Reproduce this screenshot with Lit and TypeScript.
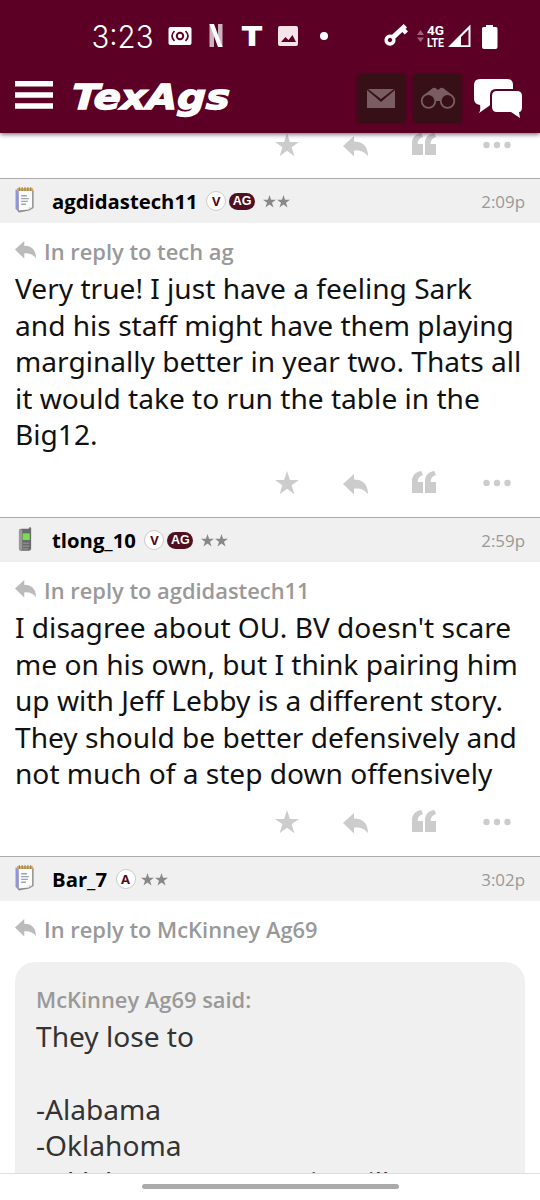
import { LitElement, html, css } from "lit";
import { customElement } from "lit/decorators.js";

const starPath = "M12 0l2.9 8.9H24l-7.4 5.4 2.8 8.9L12 17.7l-7.4 5.5 2.8-8.9L0 8.9h9.1z";
const star = (size: number, fill: string) => html`<svg width=${size} height=${size} viewBox="0 0 24 24"><path fill=${fill} d=${starPath}/></svg>`;
const reply = (w: number, h: number, fill: string) => html`<svg width=${w} height=${h} viewBox="0 0 25 21" preserveAspectRatio="none"><path fill=${fill} d="M0 10L11 0V5.5C19.5 5.5 25 10 25 20C21 15.5 17.5 14 11 14.5V20.5Z"/></svg>`;
const quote = html`<svg width="24" height="22" viewBox="0 0 24 22"><g fill="#ccc"><path d="M0 22V10C0 5 3 1 9.3 0L11 4C7.500 5 5.600 7.500 5.600 11H11V22Z"/><path d="M13 22V10C13 5 16 1 22.300 0L24 4C20.500 5 18.600 7.500 18.600 11H24V22Z"/></g></svg>`;
const dots = html`<svg width="28" height="8" viewBox="0 0 28 8"><g fill="#ccc"><circle cx="3.500" cy="4" r="3.200"/><circle cx="14" cy="4" r="3.200"/><circle cx="24.500" cy="4" r="3.200"/></g></svg>`;
const actions = html`<div class="actions"><span class="a1">${star(24, "#ccc")}</span><span class="a2">${reply(25, 21, "#ccc")}</span><span class="a3">${quote}</span><span class="a4">${dots}</span></div>`;

const notepad = html`<svg width="20" height="26" viewBox="0 0 21 27">
  <path fill="#8a8a8a" d="M2 24l2 2.500 11-2 4.500-2.500V3L4 2z"/>
  <path fill="#9395dc" d="M.5 2.500l3.500.5-.5 22-3-2z"/>
  <path fill="#fbfbfa" d="M4 4h14v17.500l-3.500 2L4 24.500z"/>
  <path fill="#c9cac5" d="M18 21.500l-3.500 2v-2z"/>
  <path fill="#d3b06a" d="M2 1h17v3H2z"/>
  <path stroke="#8a7348" stroke-width="1" d="M4.500 0v4M7.500 0v4M10.500 0v4M13.500 0v4M16.500 0v4"/>
  <path stroke="#9aa5b0" stroke-width="1.400" fill="none" d="M6.500 9h6M6.500 12h8M6.500 15h7M6.500 18h5"/></svg>`;
const phone = html`<svg width="15" height="25" viewBox="0 0 16 26">
  <rect x="11.500" y="0" width="2.500" height="5" rx="1" fill="#777"/>
  <rect x="1" y="1.500" width="13" height="23.500" rx="2.500" fill="#6a6a6a"/>
  <rect x="1" y="2" width="3.500" height="22.500" rx="1.700" fill="#9a9a9a"/>
  <rect x="5" y="6.500" width="7.500" height="7" fill="#79df50"/>
  <path stroke="#929292" stroke-width="1.200" d="M5 17h7M5 20h7M5 23h6"/></svg>`;

@customElement("app-root")
export class AppRoot extends LitElement {
  static styles = css`
    :host { display: flex; flex-direction: column; width: 540px; height: 1200px; overflow: hidden; background: #fff; font-family: "Open Sans", "Noto Sans", sans-serif; }
    * { box-sizing: border-box; }
    svg { display: block; flex: none; overflow: visible; }
    .top { height: 133px; flex: none; background: #5c0025; box-shadow: 0 1px 5px rgba(0,0,0,.65); z-index: 2; position: relative; }
    .status { height: 72px; }
    .bar { height: 61px; display: flex; align-items: flex-start; padding: 2px 0 0 15px; }
    .menu { margin-top: 7px; margin-right: 19px; }
    .btn { width: 49px; height: 49px; border-radius: 4px; background: #371017; display: grid; place-items: center; box-shadow: 0 0 2px #371017; }
    .mail { margin-left: 128px; margin-right: 7px; }
    .mail svg { margin-right: 2px; }
    .chat { margin: 5px 0 0 12px; }
    .feed { flex: none; height: 1040px; overflow: hidden; }
    .lead { height: 45px; overflow: hidden; }
    .actions { display: flex; height: 24px; align-items: center; padding-left: 275px; }
    .a2 { margin-left: 44px; padding-top: 2px; }
    .a3 { margin-left: 44px; margin-top: -3px; }
    .a4 { margin-left: 47px; margin-top: -1px; }
    .head { height: 45px; border-top: 1.500px solid #aaa; background: #f0f0f0; display: flex; align-items: center; padding: 0 15px; }
    .ico { width: 37px; height: 30px; padding-top: 1px; }
    .ico.ph { padding-left: 3px; padding-top: 2px; }
    .name { font-size: 20.300px; font-weight: 700; color: #000; white-space: nowrap; line-height: 29px; }
    .v { width: 20px; height: 20px; border: 1px solid #ccc; border-radius: 50%; background: #fff; color: #500a20; font: 700 13px/18px "Open Sans", sans-serif; text-align: center; margin-left: 8.500px; flex: none; }
    .ag { width: 26px; height: 17px; border-radius: 9px; background: #50101f; color: #fff; font: 700 12.500px/17px "Liberation Sans", sans-serif; text-align: center; margin-left: 3px; flex: none; }
    .stars { display: flex; gap: 1px; margin-left: 8px; padding-top: 1px; }
    .v + .stars { margin-left: 5px; }
    .time { margin-left: auto; font-size: 16.900px; color: #999; }
    .re { display: flex; height: 30px; font-size: 21.880px; line-height: 30px; font-weight: 600; color: #999; padding-left: 15px; white-space: nowrap; }
    .re svg { margin: 4px 8px 0 0; }
    .text { font-family: "Noto Sans", sans-serif; font-size: 28.120px; font-variant-ligatures: none; line-height: 36.500px; color: #111; padding-left: 15px; white-space: nowrap; }
    .post { height: 294px; padding-top: 14px; }
    .post .text { height: 183px; margin-top: 3px; }
    .post .actions { margin-top: 18px; }
    .last { padding-top: 14px; }
    .quote { margin: 17px 15px 0; background: #f0f0f0; border-radius: 20px; padding: 22px 21px 0; height: 300px; }
    .said { font-size: 21.880px; line-height: 32px; font-weight: 600; color: #999; }
    .quote .text { padding: 0; color: #333; margin-top: 1.500px; }
    .nav { height: 27px; flex: none; border-top: 1px solid #ddd; background: #fff; padding-top: 10px; }
    .pill { width: 257px; height: 5px; border-radius: 3px; background: #aaa; margin: 0 auto; }
  `;

  head(icon: unknown, ph: boolean, name: string, letter: string, ag: boolean, time: string) {
    return html`<div class="head"><div class="ico ${ph ? "ph" : ""}">${icon}</div><div class="name">${name}</div><div class="v">${letter}</div>${ag ? html`<div class="ag">AG</div>` : ""}<div class="stars">${star(13, "#888")}${star(13, "#888")}</div><div class="time">${time}</div></div>`;
  }
  re(who: string) {
    return html`<div class="re">${reply(21, 18, "#bbb")}<span>In reply to ${who}</span></div>`;
  }
  render() {
    return html`
    <div class="top">
      <svg class="status" width="540" height="72" viewBox="0 0 540 72" fill="#fff">
        <text x="91.500" y="48" font-family="Inter" font-weight="300" font-size="30.500" textLength="62" lengthAdjust="spacingAndGlyphs">3:23</text>
        <rect x="168.500" y="27" width="23" height="18" rx="2"/>
        <g fill="none" stroke="#5c0025" stroke-width="1.700"><circle cx="180" cy="36" r="3.200" stroke-width="2"/><path d="M174.500 31Q169.500 36 174.500 41M185.500 31Q190.500 36 185.500 41"/></g>
        <rect x="209.500" y="24" width="4.500" height="23" opacity=".7"/><rect x="218" y="24" width="4.500" height="23" opacity=".7"/><path d="M209.500 24h4.500l8.500 23h-4.500z"/>
        <text x="241" y="46" font-family="Inter" font-weight="900" font-size="27.500" textLength="22" lengthAdjust="spacingAndGlyphs">T</text>
        <rect x="278" y="26" width="20" height="20" rx="2" fill="#f5e3ea"/><path fill="#5c0025" d="M281 42l4.500-5 3 3 4-5 3.500 7z"/>
        <circle cx="324" cy="36" r="4"/>
        <g transform="translate(390 40) rotate(-43)"><path fill-rule="evenodd" d="M5 -2.400H21V2.500H19V6H14.500V2.500H5A5.600 5.600 0 1 1 5 -2.400ZM0 -2.200A2.200 2.200 0 1 0 0 2.200A2.200 2.200 0 1 0 0 -2.200Z"/></g>
        <path opacity=".4" d="M417 35l3.500-5 3.500 5zM417 37.500l3.500 4.500 3.500-4.500z"/>
        <text x="427" y="34.500" font-family="Roboto" font-weight="700" font-size="13.500" textLength="17" lengthAdjust="spacingAndGlyphs">4G</text>
        <text x="427" y="46.500" font-family="Roboto" font-weight="700" font-size="13.500" textLength="17" lengthAdjust="spacingAndGlyphs">LTE</text>
        <path fill-rule="evenodd" d="M448 47L470.500 24.500V47ZM461 37V45.300H468.500V29.500Z"/>
        <path d="M486 25h7v2h3q1.500 0 1.500 1.500v18.500q0 2-2 2h-11.500q-2 0-2-2V28.500q0-1.500 1.500-1.500h2.500z"/>
      </svg>
      <div class="bar">
        <svg class="menu" width="38" height="28" viewBox="0 0 38 28"><path fill="#fff" d="M0 0h38v5.500H0zM0 11.300h38v5.500H0zM0 22.300h38v5.500H0z"/></svg>
        <svg width="157" height="44" viewBox="0 0 157 44"><text transform="skewX(-3)" x="1" y="35" fill="#fff" stroke="#fff" stroke-width="1.400" font-family="DejaVu Sans" font-weight="700" font-style="italic" font-size="34.500" textLength="158" lengthAdjust="spacingAndGlyphs">TexAgs</text></svg>
        <div class="btn mail"><svg width="28" height="19" viewBox="0 0 28 19"><path fill="#795d62" d="M1 0h26L14 10zM0 1l14 12L28 1v18H0z"/></svg></div>
        <div class="btn"><svg width="34" height="21" viewBox="0 0 34 21"><path fill="#795d62" d="M3 7L10 1.500Q12-1 14.500 0L17 2l2.500-2Q22-1 24 1.500L31 7v6H3z"/><g fill="#371017" stroke="#795d62" stroke-width="1.800"><circle cx="7.500" cy="13" r="6.800"/><circle cx="26.500" cy="13" r="6.800"/></g></svg></div>
        <svg class="chat" width="48" height="39" viewBox="0 0 48 39"><path fill="#fff" d="M6 0h27q6 0 6 6v4H22q-6 0-6 6v10l-1 1-10 7q2-3 1-8-6-1-6-6V6q0-6 6-6z"/><path fill="#fff" d="M23 12h20q5 0 5 5v11q0 5-3 5l1 6-9-6H23q-5 0-5-5V17q0-5 5-5z"/></svg>
      </div>
    </div>
    <div class="feed">
      <div class="lead">${actions}</div>
      ${this.head(notepad, false, "agdidastech11", "V", true, "2:09p")}
      <div class="post">${this.re("tech ag")}
        <div class="text">Very true! I just have a feeling Sark<br>and his staff might have them playing<br>marginally better in year two. Thats all<br>it would take to run the table in the<br>Big12.</div>${actions}</div>
      ${this.head(phone, true, "tlong_10", "V", true, "2:59p")}
      <div class="post">${this.re("agdidastech11")}
        <div class="text">I disagree about OU. BV doesn't scare<br>me on his own, but I think pairing him<br>up with Jeff Lebby is a different story.<br>They should be better defensively and<br>not much of a step down offensively</div>${actions}</div>
      ${this.head(notepad, false, "Bar_7", "A", false, "3:02p")}
      <div class="last">${this.re("McKinney Ag69")}
        <div class="quote"><div class="said">McKinney Ag69 said:</div><div class="text">They lose to<br><br>-Alabama<br>-Oklahoma<br>-Oklahoma State It's in Stillwater</div></div></div>
    </div>
    <div class="nav"><div class="pill"></div></div>`;
  }
}
